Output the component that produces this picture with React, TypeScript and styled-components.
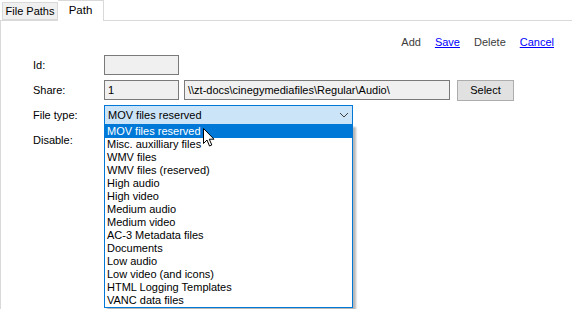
import * as React from "react";
import styled, { createGlobalStyle } from "styled-components";

const GlobalStyle = createGlobalStyle`
  html, body {
    margin: 0;
    padding: 0;
    background: #ffffff;
  }
  body {
    font-family: "Liberation Sans", Arial, sans-serif;
    font-size: 11px;
    color: #000000;
  }
`;

const Window = styled.div`
  position: relative;
  width: 572px;
  height: 309px;
  overflow: hidden;
  background: #ffffff;
`;

const TabStrip = styled.div`
  display: flex;
  align-items: flex-end;
  height: 20px;
  padding-left: 2px;
  border-bottom: 1px solid #d9d9d9;
`;

const Tab = styled.div<{ $active?: boolean }>`
  box-sizing: border-box;
  height: ${(p) => (p.$active ? "21px" : "18px")};
  margin-bottom: ${(p) => (p.$active ? "-1px" : "0")};
  padding-top: ${(p) => (p.$active ? "3px" : "2px")};
  width: ${(p) => (p.$active ? "46px" : "56px")};
  background: ${(p) => (p.$active ? "#ffffff" : "#f0f0f0")};
  border: 1px solid #d9d9d9;
  border-bottom: ${(p) => (p.$active ? "none" : "1px solid #d9d9d9")};
  border-left: ${(p) => (p.$active ? "none" : "1px solid #d9d9d9")};
  font-size: ${(p) => (p.$active ? "11.5px" : "11px")};
  text-align: center;
  white-space: nowrap;
`;

const Panel = styled.div`
  height: 288px;
  border-left: 1px solid #d9d9d9;
  box-sizing: border-box;
`;

const Actions = styled.div`
  display: flex;
  justify-content: flex-end;
  gap: 14px;
  padding: 14px 18px 0 0;
  height: 14px;
  line-height: 14px;
`;

const Action = styled.span<{ $link?: boolean }>`
  color: ${(p) => (p.$link ? "#0000ff" : "#3c3c3c")};
  text-decoration: ${(p) => (p.$link ? "underline" : "none")};
  cursor: ${(p) => (p.$link ? "pointer" : "default")};
`;

const Form = styled.div`
  display: grid;
  grid-template-columns: 71px auto;
  row-gap: 5px;
  padding: 6px 0 0 32px;
  align-items: center;
`;

const Label = styled.div`
  line-height: 20px;
`;

const Row = styled.div`
  display: flex;
  align-items: center;
  height: 20px;
`;

const TextBox = styled.div<{ $width: number }>`
  box-sizing: border-box;
  width: ${(p) => p.$width}px;
  height: 20px;
  margin-right: 5px;
  padding: 0 3px;
  background: #f0f0f0;
  border: 1px solid #7a7a7a;
  line-height: 18px;
  white-space: nowrap;
  overflow: hidden;
`;

const Button = styled.div`
  box-sizing: border-box;
  width: 57px;
  height: 21px;
  margin-left: 2px;
  background: #e1e1e1;
  border: 1px solid #adadad;
  display: flex;
  align-items: center;
  justify-content: center;
`;

const ComboWrap = styled.div`
  position: relative;
  width: 249px;
  height: 20px;
`;

const Combo = styled.div`
  box-sizing: border-box;
  width: 249px;
  height: 20px;
  padding: 0 3px;
  background: #cce4f7;
  border: 1px solid #0078d7;
  display: flex;
  align-items: center;
  justify-content: space-between;
`;

const DropList = styled.div`
  position: absolute;
  left: 0;
  top: 19px;
  width: 249px;
  box-sizing: border-box;
  background: #ffffff;
  border: 1px solid #0078d7;
  box-shadow: 3px 3px 2px rgba(0, 0, 0, 0.28);
  z-index: 5;
`;

const Item = styled.div<{ $selected?: boolean }>`
  height: 13px;
  line-height: 13px;
  padding-left: 2px;
  background: ${(p) => (p.$selected ? "#0078d7" : "#ffffff")};
  color: ${(p) => (p.$selected ? "#ffffff" : "#000000")};
  white-space: nowrap;
`;

const Cursor = styled.svg`
  position: absolute;
  left: 203px;
  top: 128px;
  z-index: 10;
`;

const fileTypes = [
  "MOV files reserved",
  "Misc. auxilliary files",
  "WMV files",
  "WMV files (reserved)",
  "High audio",
  "High video",
  "Medium audio",
  "Medium video",
  "AC-3 Metadata files",
  "Documents",
  "Low audio",
  "Low video (and icons)",
  "HTML Logging Templates",
  "VANC data files",
];

export default function App() {
  return (
    <Window>
      <GlobalStyle />
      <TabStrip>
        <Tab>File Paths</Tab>
        <Tab $active>Path</Tab>
      </TabStrip>

      <Panel>
        <Actions>
          <Action>Add</Action>
          <Action $link>Save</Action>
          <Action>Delete</Action>
          <Action $link>Cancel</Action>
        </Actions>

        <Form>
          <Label>Id:</Label>
          <Row>
            <TextBox $width={75} />
          </Row>

          <Label>Share:</Label>
          <Row>
            <TextBox $width={75}>1</TextBox>
            <TextBox $width={266}>\\zt-docs\cinegymediafiles\Regular\Audio\</TextBox>
            <Button>Select</Button>
          </Row>

          <Label>File type:</Label>
          <Row>
            <ComboWrap>
              <Combo>
                <span>MOV files reserved</span>
                <svg width="10" height="6" viewBox="0 0 10 6">
                  <path d="M1 1 L5 5 L9 1" fill="none" stroke="#404040" strokeWidth="1" />
                </svg>
              </Combo>
              <DropList>
                {fileTypes.map((t, i) => (
                  <Item key={t} $selected={i === 0}>
                    {t}
                  </Item>
                ))}
              </DropList>
            </ComboWrap>
          </Row>

          <Label>Disable:</Label>
          <Row />
        </Form>
      </Panel>

      {/* mouse pointer over the open list */}
      <Cursor width="13" height="20" viewBox="0 0 13 20">
        <path
          d="M0.5 0.5 L0.5 15.5 L4 12 L6.5 18 L8.8 17 L6.3 11.2 L11 11.2 Z"
          fill="#ffffff"
          stroke="#000000"
          strokeWidth="1"
          strokeLinejoin="miter"
        />
      </Cursor>
    </Window>
  );
}
